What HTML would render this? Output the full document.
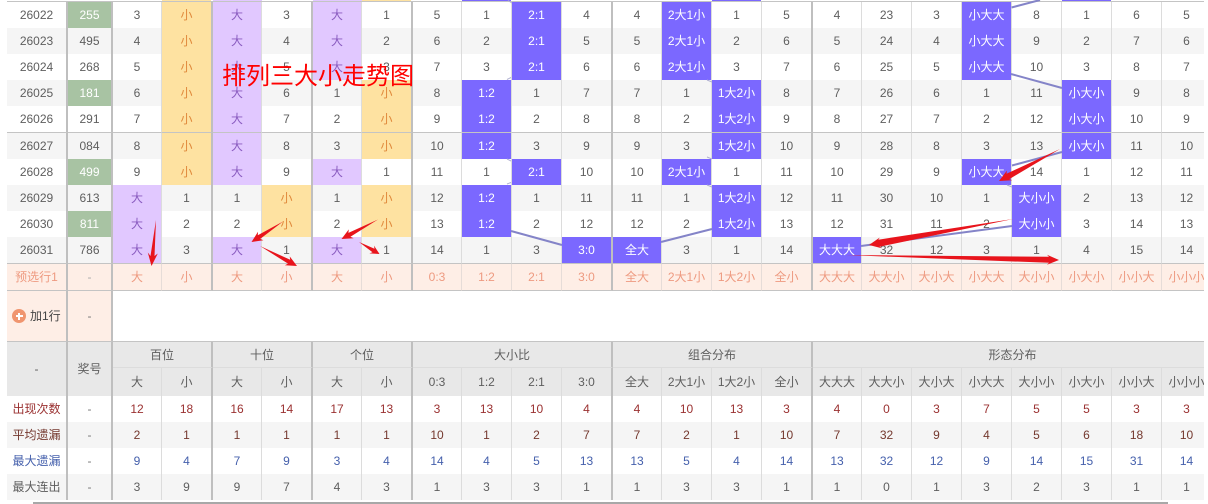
<!DOCTYPE html>
<html><head><meta charset="utf-8">
<style>
html,body{margin:0;padding:0;background:#fff;width:1208px;height:504px;overflow:hidden}
#w{position:absolute;left:7px;top:0;width:1197px;height:500px;overflow:hidden}
table{position:absolute;left:0;top:2px;width:1205px;table-layout:fixed;border-collapse:separate;border-spacing:0;font:12px/14px "Liberation Sans","Noto Sans CJK SC",sans-serif;color:#5e5e5e}
td{padding:0;text-align:center;white-space:nowrap;overflow:hidden;box-sizing:border-box;border-right:1px solid #dcdcdc;background:#fff}
tr{height:26px}
.d td:nth-child(1),.d td:nth-child(2),.d td:nth-child(4),.d td:nth-child(6),.d td:nth-child(8),.d td:nth-child(12),.d td:nth-child(16){border-right:2px solid #bfbfbf}
.z td{background:#f5f5f5}
.l td{border-bottom:1px solid #c4c4c4}
.d td.g{background:#a8c3a3;color:#fff}
.d td.y{background:#fee2a1;color:#e08a3c}
.d td.p{background:#e1c8ff;color:#8a5cc0}
.d td.b{background:#7b68ff;color:#fff}
.v td{background:#feeee6;color:#ee9a80;border-right-color:#e6dcd8}
.v td.t{color:#aaa}
.h td{background:#e8e8e8;color:#5e5e5e}
.h td.k{border-right:2px solid #bfbfbf}
.h1 td{border-bottom:1px solid #dcdcdc}
.r1 td{color:#9a3030}
.r2 td{color:#74382e}
.r3 td{color:#4560ac}
.r td:nth-child(2){color:#777}
.top{position:absolute;top:0;height:1px}
#o{position:absolute;left:0;top:0}
#tt{position:absolute;left:222px;top:62px;font:24px/30px "Liberation Sans","Noto Sans CJK SC",sans-serif;color:#f00;white-space:nowrap}
#add{position:absolute;left:12px;top:309px;width:14px;height:14px;border-radius:50%;background:#f0956f}
#add:before{content:"";position:absolute;left:3.5px;top:6px;width:7px;height:2px;background:#fff}
#add:after{content:"";position:absolute;left:6px;top:3.5px;width:2px;height:7px;background:#fff}
#at{position:absolute;left:30px;top:309px;font:12px/14px "Liberation Sans","Noto Sans CJK SC",sans-serif;color:#444;white-space:nowrap}
</style></head><body>
<div class="top" style="left:162px;width:49px;background:#fee2a1"></div>
<div class="top" style="left:213px;width:49px;background:#e1c8ff"></div>
<div class="top" style="left:313px;width:49px;background:#e1c8ff"></div>
<div class="top" style="left:362px;width:49px;background:#fee2a1"></div>
<div class="top" style="left:462px;width:49px;background:#7b68ff"></div>
<div class="top" style="left:712px;width:49px;background:#7b68ff"></div>
<div class="top" style="left:1062px;width:49px;background:#7b68ff"></div>
<div style="position:absolute;left:7px;top:1px;width:1197px;height:1px;background:#c4c4c4"></div>
<div id="w">
<table>
<colgroup><col style="width:61px"><col style="width:45px"><col style="width:49px"><col style="width:51px"><col style="width:49px"><col style="width:51px"><col style="width:49px"><col style="width:51px"><col style="width:49px"><col style="width:50px"><col style="width:50px"><col style="width:51px"><col style="width:49px"><col style="width:50px"><col style="width:50px"><col style="width:51px"><col style="width:49px"><col style="width:50px"><col style="width:50px"><col style="width:50px"><col style="width:50px"><col style="width:50px"><col style="width:50px"><col style="width:50px"></colgroup>
<tr class="d"><td>26022</td><td class="g">255</td><td>3</td><td class="y">小</td><td class="p">大</td><td>3</td><td class="p">大</td><td>1</td><td>5</td><td>1</td><td class="b">2:1</td><td>4</td><td>4</td><td class="b">2大1小</td><td>1</td><td>5</td><td>4</td><td>23</td><td>3</td><td class="b">小大大</td><td>8</td><td>1</td><td>6</td><td>5</td></tr>
<tr class="d z"><td>26023</td><td>495</td><td>4</td><td class="y">小</td><td class="p">大</td><td>4</td><td class="p">大</td><td>2</td><td>6</td><td>2</td><td class="b">2:1</td><td>5</td><td>5</td><td class="b">2大1小</td><td>2</td><td>6</td><td>5</td><td>24</td><td>4</td><td class="b">小大大</td><td>9</td><td>2</td><td>7</td><td>6</td></tr>
<tr class="d"><td>26024</td><td>268</td><td>5</td><td class="y">小</td><td class="p">大</td><td>5</td><td class="p">大</td><td>3</td><td>7</td><td>3</td><td class="b">2:1</td><td>6</td><td>6</td><td class="b">2大1小</td><td>3</td><td>7</td><td>6</td><td>25</td><td>5</td><td class="b">小大大</td><td>10</td><td>3</td><td>8</td><td>7</td></tr>
<tr class="d z"><td>26025</td><td class="g">181</td><td>6</td><td class="y">小</td><td class="p">大</td><td>6</td><td>1</td><td class="y">小</td><td>8</td><td class="b">1:2</td><td>1</td><td>7</td><td>7</td><td>1</td><td class="b">1大2小</td><td>8</td><td>7</td><td>26</td><td>6</td><td>1</td><td>11</td><td class="b">小大小</td><td>9</td><td>8</td></tr>
<tr class="d l" style="height:27px"><td>26026</td><td>291</td><td>7</td><td class="y">小</td><td class="p">大</td><td>7</td><td>2</td><td class="y">小</td><td>9</td><td class="b">1:2</td><td>2</td><td>8</td><td>8</td><td>2</td><td class="b">1大2小</td><td>9</td><td>8</td><td>27</td><td>7</td><td>2</td><td>12</td><td class="b">小大小</td><td>10</td><td>9</td></tr>
<tr class="d z"><td>26027</td><td>084</td><td>8</td><td class="y">小</td><td class="p">大</td><td>8</td><td>3</td><td class="y">小</td><td>10</td><td class="b">1:2</td><td>3</td><td>9</td><td>9</td><td>3</td><td class="b">1大2小</td><td>10</td><td>9</td><td>28</td><td>8</td><td>3</td><td>13</td><td class="b">小大小</td><td>11</td><td>10</td></tr>
<tr class="d"><td>26028</td><td class="g">499</td><td>9</td><td class="y">小</td><td class="p">大</td><td>9</td><td class="p">大</td><td>1</td><td>11</td><td>1</td><td class="b">2:1</td><td>10</td><td>10</td><td class="b">2大1小</td><td>1</td><td>11</td><td>10</td><td>29</td><td>9</td><td class="b">小大大</td><td>14</td><td>1</td><td>12</td><td>11</td></tr>
<tr class="d z"><td>26029</td><td>613</td><td class="p">大</td><td>1</td><td>1</td><td class="y">小</td><td>1</td><td class="y">小</td><td>12</td><td class="b">1:2</td><td>1</td><td>11</td><td>11</td><td>1</td><td class="b">1大2小</td><td>12</td><td>11</td><td>30</td><td>10</td><td>1</td><td class="b">大小小</td><td>2</td><td>13</td><td>12</td></tr>
<tr class="d"><td>26030</td><td class="g">811</td><td class="p">大</td><td>2</td><td>2</td><td class="y">小</td><td>2</td><td class="y">小</td><td>13</td><td class="b">1:2</td><td>2</td><td>12</td><td>12</td><td>2</td><td class="b">1大2小</td><td>13</td><td>12</td><td>31</td><td>11</td><td>2</td><td class="b">大小小</td><td>3</td><td>14</td><td>13</td></tr>
<tr class="d z l" style="height:27px"><td>26031</td><td>786</td><td class="p">大</td><td>3</td><td class="p">大</td><td>1</td><td class="p">大</td><td>1</td><td>14</td><td>1</td><td>3</td><td class="b">3:0</td><td class="b">全大</td><td>3</td><td>1</td><td>14</td><td class="b">大大大</td><td>32</td><td>12</td><td>3</td><td>1</td><td>4</td><td>15</td><td>14</td></tr>
<tr class="d v l" style="height:27px"><td>预选行1</td><td class="t">-</td><td>大</td><td>小</td><td>大</td><td>小</td><td>大</td><td>小</td><td>0:3</td><td>1:2</td><td>2:1</td><td>3:0</td><td>全大</td><td>2大1小</td><td>1大2小</td><td>全小</td><td>大大大</td><td>大大小</td><td>大小大</td><td>小大大</td><td>大小小</td><td>小大小</td><td>小小大</td><td>小小小</td></tr>
<tr class="d v l" style="height:51px"><td>&nbsp;</td><td class="t" style="color:#777">-</td><td colspan="22" style="background:#fff;border-right:0"></td></tr>
<tr class="h h1"><td rowspan="2" class="k" style="border-bottom:0">-</td><td rowspan="2" class="k" style="border-bottom:0">奖号</td><td colspan="2" class="k">百位</td><td colspan="2" class="k">十位</td><td colspan="2" class="k">个位</td><td colspan="4" class="k">大小比</td><td colspan="4" class="k">组合分布</td><td colspan="8" style="border-right:0">形态分布</td></tr>
<tr class="h" style="height:28px"><td>大</td><td class="k">小</td><td>大</td><td class="k">小</td><td>大</td><td class="k">小</td><td>0:3</td><td>1:2</td><td>2:1</td><td class="k">3:0</td><td>全大</td><td>2大1小</td><td>1大2小</td><td class="k">全小</td><td>大大大</td><td>大大小</td><td>大小大</td><td>小大大</td><td>大小小</td><td>小大小</td><td>小小大</td><td>小小小</td></tr>
<tr class="d r r1"><td>出现次数</td><td>-</td><td>12</td><td>18</td><td>16</td><td>14</td><td>17</td><td>13</td><td>3</td><td>13</td><td>10</td><td>4</td><td>4</td><td>10</td><td>13</td><td>3</td><td>4</td><td>0</td><td>3</td><td>7</td><td>5</td><td>5</td><td>3</td><td>3</td></tr>
<tr class="d z r r2"><td>平均遗漏</td><td>-</td><td>2</td><td>1</td><td>1</td><td>1</td><td>1</td><td>1</td><td>10</td><td>1</td><td>2</td><td>7</td><td>7</td><td>2</td><td>1</td><td>10</td><td>7</td><td>32</td><td>9</td><td>4</td><td>5</td><td>6</td><td>18</td><td>10</td></tr>
<tr class="d r r3"><td>最大遗漏</td><td>-</td><td>9</td><td>4</td><td>7</td><td>9</td><td>3</td><td>4</td><td>14</td><td>4</td><td>5</td><td>13</td><td>13</td><td>5</td><td>4</td><td>14</td><td>13</td><td>32</td><td>12</td><td>9</td><td>14</td><td>15</td><td>31</td><td>14</td></tr>
<tr class="d z r"><td>最大连出</td><td>-</td><td>3</td><td>9</td><td>9</td><td>7</td><td>4</td><td>3</td><td>1</td><td>3</td><td>3</td><td>1</td><td>1</td><td>3</td><td>3</td><td>1</td><td>1</td><td>0</td><td>1</td><td>3</td><td>2</td><td>3</td><td>1</td><td>1</td></tr>
</table>
</div>
<div id="add"></div><div id="at">加1行</div>
<div style="position:absolute;left:33px;top:502px;width:1135px;height:2px;background:#a8a8a8"></div>
<svg id="o" width="1208" height="504" viewBox="0 0 1208 504">
<g stroke="#8484c8" stroke-width="2" fill="none">
<path d="M1011.5 7.5L1040 0"/>
<path d="M1011 74L1062 88"/>
<path d="M1012 165.5L1062 152"/>
<path d="M511 231L562 245"/>
<path d="M661 242L712 229"/>
<path d="M1012 226L861 246"/>
<path d="M507 79.5L511 77.5M508 0.5L512 3M507 159L511 161M507 184L511 182.5M707 80L712 82M707 157L712 159M707 185L712 187M1007 185L1012 187" stroke-width="1" stroke="#b0b0d0"/>
</g>
<g fill="#e8141c">
<polygon points="156,220 154.5,256 157.8,253.5 151.5,266 147.8,252.5 150.5,256"/>
<polygon points="283,221.5 260.2,238.9 263.4,240.2 251.5,242 258,231.8 257.8,235.3"/>
<polygon points="260,246 288,263.6 284.9,265.2 297,266 289.7,256.4 290.2,259.8"/>
<polygon points="378,219.5 350.4,236.7 353.6,238.2 341.5,239 348.8,229.4 348.4,232.9"/>
<polygon points="359,242 372.5,252.2 369.4,253.4 379.5,254 374,245.6 374.5,248.8"/>
<polygon points="1060,149 1009.3,179.1 1012.2,180.3 999,181 1007,170.5 1006.5,173.7"/>
<polygon points="1013,219 879.5,246.7 881.8,248.3 869,245 879.8,237.5 878.3,239.7"/>
<polygon points="846,255 1049,262.8 1047,264.8 1059,260 1047,254.7 1049,256.8"/>
</g>
</svg>
<div id="tt">排列三大小走势图</div>
</body></html>
